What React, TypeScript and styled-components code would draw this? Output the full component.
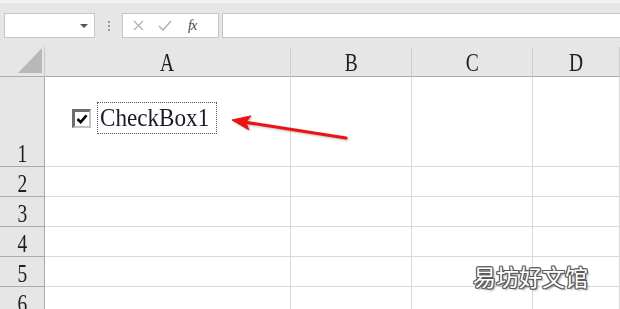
import React from "react";
import styled, { createGlobalStyle } from "styled-components";

const Global = createGlobalStyle`
  html, body { margin: 0; padding: 0; background: #ffffff; overflow: hidden; }
  * { box-sizing: border-box; }
`;

const Page = styled.div`
  position: relative;
  width: 620px;
  height: 309px;
  overflow: hidden;
  background: #ffffff;
  font-family: "Liberation Serif", "Times New Roman", serif;
`;

const FormulaBar = styled.div`
  height: 47px;
  background: #e6e6e6;
  border-top: 3px solid #f3f3f3;
  display: flex;
  align-items: flex-start;
  padding: 10px 0 0 4px;
`;

const NameBox = styled.div`
  width: 91px;
  height: 25px;
  background: #ffffff;
  border: 1px solid #c6c6c6;
  display: flex;
  align-items: center;
  justify-content: flex-end;
  padding-right: 6px;
`;

const DropArrow = styled.span`
  width: 0;
  height: 0;
  border-left: 4px solid transparent;
  border-right: 4px solid transparent;
  border-top: 4px solid #555555;
`;

const Grip = styled.div`
  width: 27px;
  height: 25px;
  display: flex;
  flex-direction: column;
  align-items: center;
  justify-content: center;
  gap: 2px;
`;

const GripDot = styled.span`
  width: 2px;
  height: 2px;
  background: #9a9a9a;
`;

const FxBox = styled.div`
  width: 97px;
  height: 25px;
  background: #ffffff;
  border: 1px solid #c6c6c6;
  display: flex;
  align-items: center;
  padding-left: 10px;
  gap: 14px;
`;

const FxText = styled.span`
  font-family: "Liberation Serif", serif;
  font-style: italic;
  font-size: 14px;
  color: #444444;
  letter-spacing: -1px;
  margin-left: 2px;
`;

const FormulaInput = styled.div`
  flex: 1;
  height: 25px;
  margin-left: 3px;
  background: #ffffff;
  border: 1px solid #c6c6c6;
  border-right: none;
`;

const Sheet = styled.div`
  display: grid;
  grid-template-columns: 45px 246px 121px 121px 1fr;
  grid-template-rows: 30px 90px 30px 30px 30px 30px 30px;
`;

const Corner = styled.div`
  background: #e6e6e6;
  border-right: 1px solid #c8c8c8;
  border-bottom: 1px solid #ababab;
  display: flex;
  align-items: flex-end;
  justify-content: flex-end;
  padding: 0 2px 3px 0;
`;

const CornerTriangle = styled.div`
  width: 0;
  height: 0;
  border-left: 24px solid transparent;
  border-bottom: 25px solid #b8b8b8;
`;

const ColHead = styled.div`
  background: #e6e6e6;
  border-right: 1px solid #cdcdcd;
  border-bottom: 1px solid #ababab;
  display: flex;
  align-items: flex-end;
  justify-content: center;
  padding-bottom: 1px;
  color: #1f1f1f;
`;

const RowHead = styled.div`
  background: #e6e6e6;
  border-right: 1px solid #ababab;
  border-bottom: 1px solid #ababab;
  display: flex;
  align-items: flex-end;
  justify-content: center;
  color: #1f1f1f;
`;

const HeadLabel = styled.span`
  display: inline-block;
  font-family: "Liberation Serif", "Times New Roman", serif;
  font-size: 25px;
  line-height: 25px;
  transform: scaleX(0.78);
`;

const Cell = styled.div`
  position: relative;
  background: #ffffff;
  border-right: 1px solid #d9d9d9;
  border-bottom: 1px solid #d9d9d9;
`;

const Control = styled.div`
  position: absolute;
  left: 27px;
  top: 25px;
  display: flex;
  align-items: center;
  gap: 6px;
`;

const CheckSquare = styled.div`
  width: 19px;
  height: 19px;
  background: #ffffff;
  border-top: 3px solid #6e6e6e;
  border-left: 3px solid #6e6e6e;
  border-right: 2px solid #c4c4c4;
  border-bottom: 2px solid #c4c4c4;
  display: flex;
  align-items: center;
  justify-content: center;
`;

const CheckLabel = styled.div`
  width: 120px;
  height: 32px;
  border: 1px dotted #555555;
  display: flex;
  align-items: center;
  padding-left: 2px;
  white-space: nowrap;
`;

const LabelText = styled.span`
  display: inline-block;
  font-family: "Liberation Serif", "Times New Roman", serif;
  font-size: 26px;
  line-height: 28px;
  color: #1a1a2a;
  transform-origin: left center;
  transform: scaleX(0.89);
`;

const ArrowSvg = styled.svg`
  position: absolute;
  left: 225px;
  top: 105px;
  overflow: visible;
  filter: drop-shadow(1px 1px 1px rgba(0, 0, 0, 0.3));
`;

const Watermark = styled.div`
  position: absolute;
  left: 473px;
  top: 262px;
  font-family: "Noto Sans CJK SC", sans-serif;
  font-size: 23px;
  line-height: 28px;
  color: #ffffff;
  letter-spacing: 0px;
  text-shadow:
    -1px 0 #5a5a5a, 1px 0 #5a5a5a, 0 -1px #5a5a5a, 0 1px #5a5a5a,
    -1px -1px #5a5a5a, 1px 1px #5a5a5a, 1px -1px #5a5a5a, -1px 1px #5a5a5a,
    2px 2px 2px rgba(0, 0, 0, 0.35);
`;

const cols = ["A", "B", "C", "D"];
const rowNums = [1, 2, 3, 4, 5, 6];

export default function App() {
  return (
    <>
      <Global />
      <Page>
        <FormulaBar>
          <NameBox>
            <DropArrow />
          </NameBox>
          <Grip>
            <GripDot />
            <GripDot />
            <GripDot />
          </Grip>
          <FxBox>
            <svg width="11" height="11" viewBox="0 0 11 11">
              <path d="M1 1 L10 10 M10 1 L1 10" stroke="#b4b4b4" strokeWidth="1.4" />
            </svg>
            <svg width="14" height="11" viewBox="0 0 14 11">
              <path d="M1 6 L5 10 L13 1" stroke="#b4b4b4" strokeWidth="1.6" fill="none" />
            </svg>
            <FxText>fx</FxText>
          </FxBox>
          <FormulaInput />
        </FormulaBar>
        <Sheet>
          <Corner>
            <CornerTriangle />
          </Corner>
          {cols.map((c) => (
            <ColHead key={c}>
              <HeadLabel>{c}</HeadLabel>
            </ColHead>
          ))}
          {rowNums.map((r) => (
            <React.Fragment key={r}>
              <RowHead>
                <HeadLabel>{r}</HeadLabel>
              </RowHead>
              {cols.map((c) => (
                <Cell key={c}>
                  {r === 1 && c === "A" && (
                    <Control>
                      <CheckSquare>
                        <svg width="12" height="10" viewBox="0 0 13 11">
                          <path d="M1.5 5.5 L5 9 L11.5 1.5" stroke="#000" strokeWidth="2.8" fill="none" />
                        </svg>
                      </CheckSquare>
                      <CheckLabel>
                        <LabelText>CheckBox1</LabelText>
                      </CheckLabel>
                    </Control>
                  )}
                </Cell>
              ))}
            </React.Fragment>
          ))}
        </Sheet>
        <ArrowSvg width="130" height="45" viewBox="0 0 130 45">
          <line x1="20" y1="17.2" x2="121" y2="33" stroke="#ee1111" strokeWidth="3" strokeLinecap="round" />
          <path d="M7 15 L25.9 10.9 L20.8 17.2 L23.7 24.7 Z" fill="#ee1111" stroke="#ee1111" strokeWidth="1" strokeLinejoin="round" />
        </ArrowSvg>
        <Watermark>易坊好文馆</Watermark>
      </Page>
    </>
  );
}
